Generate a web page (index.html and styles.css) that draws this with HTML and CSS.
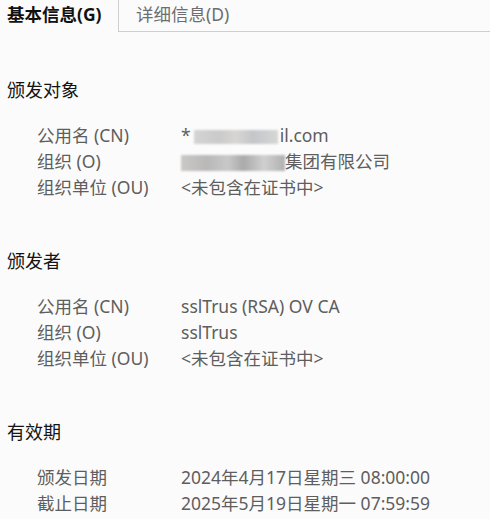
FILE: index.html
```html
<!DOCTYPE html>
<html lang="zh-CN">
<head>
<meta charset="utf-8">
<link rel="stylesheet" href="styles.css">
</head>
<body>
<div class="tabs">
  <div class="tab active">基本信息(G)</div>
  <div class="tab">详细信息(D)</div>
  <div class="tab-fill"></div>
</div>
<div class="content">
  <section class="group">
    <h2 class="heading">颁发对象</h2>
    <div class="rows">
      <div class="row"><span class="label">公用名 (CN)</span><span class="value">*<span class="blur b1"></span>il.com</span></div>
      <div class="row"><span class="label">组织 (O)</span><span class="value"><span class="blur b2"></span>集团有限公司</span></div>
      <div class="row"><span class="label">组织单位 (OU)</span><span class="value">&lt;未包含在证书中&gt;</span></div>
    </div>
  </section>
  <section class="group">
    <h2 class="heading">颁发者</h2>
    <div class="rows">
      <div class="row"><span class="label">公用名 (CN)</span><span class="value">sslTrus (RSA) OV CA</span></div>
      <div class="row"><span class="label">组织 (O)</span><span class="value">sslTrus</span></div>
      <div class="row"><span class="label">组织单位 (OU)</span><span class="value">&lt;未包含在证书中&gt;</span></div>
    </div>
  </section>
  <section class="group">
    <h2 class="heading">有效期</h2>
    <div class="rows">
      <div class="row"><span class="label">颁发日期</span><span class="value">2024年4月17日星期三 08:00:00</span></div>
      <div class="row"><span class="label">截止日期</span><span class="value">2025年5月19日星期一 07:59:59</span></div>
    </div>
  </section>
</div>
</body>
</html>
```

FILE: styles.css
```css
html, body {
  margin: 0;
  padding: 0;
  background: #fbfbfb;
  font-family: "Noto Sans", "Noto Sans CJK SC", sans-serif;
}
.tabs {
  display: flex;
  height: 32px;
}
.tab {
  line-height: 29px;
  font-size: 17.5px;
  color: #6e6e6e;
  border-bottom: 1px solid #cfcfcf;
  box-sizing: border-box;
  height: 32px;
  padding: 0 12px 0 17px;
}
.tab.active {
  width: 119px;
  font-weight: bold;
  color: #111;
  border-bottom: none;
  border-right: 1px solid #cfcfcf;
  padding: 0 0 0 7px;
  white-space: nowrap;
}
.tab-fill {
  flex: 1;
  border-bottom: 1px solid #cfcfcf;
}
.content {
  padding: 0 0 0 7px;
}
.group {
  padding-top: 45px;
}
.group + .group {
  padding-top: 48px;
}
.heading {
  margin: 0;
  font-size: 18px;
  font-weight: normal;
  color: #141414;
  line-height: 26px;
}
.rows {
  padding: 19px 0 0 30px;
}
.row {
  display: flex;
  height: 26px;
  line-height: 26px;
  font-size: 17.5px;
  color: #5e5e5e;
}
.label {
  width: 144px;
  flex: none;
}
.blur {
  display: inline-block;
  vertical-align: middle;
  background: linear-gradient(90deg, #d4d4d4 0%, #cacaca 30%, #d8d6d4 50%, #c4c6ca 70%, #d6d6d6 100%);
  filter: blur(1px);
}
.b1 {
  width: 84px;
  height: 14px;
  margin: 0 2px 0 3px;
}
.b2 {
  width: 104px;
  height: 16px;
  background: linear-gradient(90deg, #cbc9c6 0%, #b8b8b8 25%, #c8c8c8 45%, #aaaaaa 60%, #d0d0d0 80%, #b0b0b0 100%);
}
```
